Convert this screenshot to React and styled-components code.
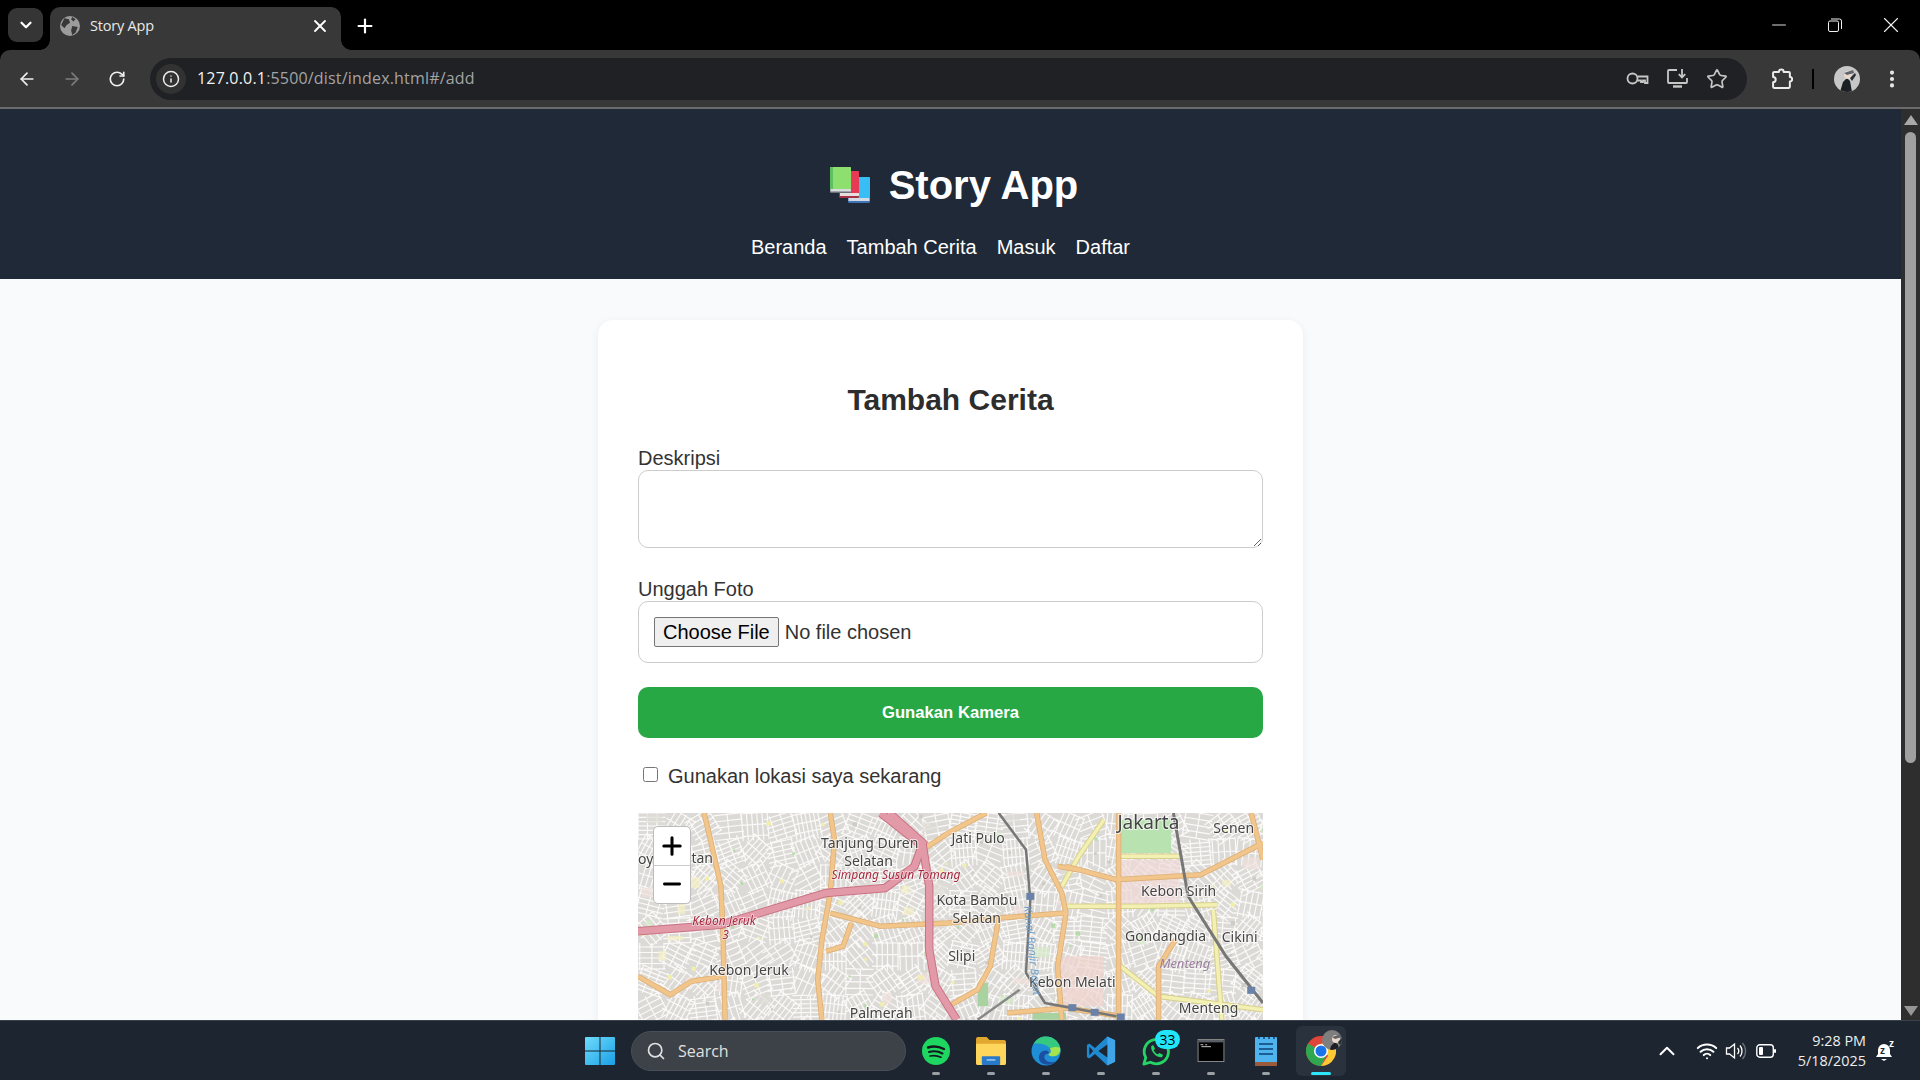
import React from "react";
import styled, { createGlobalStyle } from "styled-components";
import { Star, EllipsisVertical, ArrowLeft, ArrowRight, RotateCw, Info, ChevronDown, ChevronUp, Plus, X, Minus, Search, Wifi } from "lucide-react";

const Global = createGlobalStyle`
  html, body { margin: 0; padding: 0; height: 100%; overflow: hidden; }
  #root { height: 100%; }
  * { box-sizing: border-box; }
`;

const Screen = styled.div`
  width: 1920px; height: 1080px; display: flex; flex-direction: column;
  font-family: "Liberation Sans", Arial, sans-serif; overflow: hidden; background: #000;
`;
const TabStrip = styled.div`
  height: 50px; background: #000; display: flex; align-items: flex-end; padding-left: 8px; flex: none; color: #fff;
`;
const TabMenu = styled.div`
  width: 35px; height: 34px; margin-bottom: 8px; border-radius: 9px; background: #353535; display: flex; align-items: center; justify-content: center;
`;
const Tab = styled.div`
  width: 291px; height: 43px; margin-left: 7px; background: #383838; border-radius: 10px 10px 0 0; display: flex; align-items: center; padding: 0 11px 6px 10px; gap: 10px; position: relative;
  &::before, &::after { content: ""; position: absolute; bottom: 0; width: 10px; height: 10px; }
  &::before { left: -10px; background: radial-gradient(circle at 0 0, #000 9.500px, #383838 10px); }
  &::after { right: -10px; background: radial-gradient(circle at 100% 0, #000 9.500px, #383838 10px); }
`;
const TabTitle = styled.span`
  font-family: "Open Sans", "Noto Sans", sans-serif; font-size: 14.500px; color: #e8e8e8; flex: 1; letter-spacing: -0.2px;
`;
const NewTab = styled.div`
  width: 28px; height: 43px; margin-left: 10px; padding-bottom: 6px; display: flex; align-items: center; justify-content: center;
`;
const WindowButtons = styled.div`
  margin-left: auto; height: 50px; display: flex; align-items: center; padding-right: 1px;
`;
const WindowButton = styled.div`
  width: 56px; height: 50px; display: flex; align-items: center; justify-content: center; color: #f2f2f2;
`;
const Toolbar = styled.div`
  height: 59px; flex: none; background: #383838; border-bottom: 2px solid #6b6b6b; border-radius: 10px 10px 0 0; display: flex; align-items: center; padding: 0 0 0 8px; color: #e8e8e8;
`;
const NavIcon = styled.div`
  width: 38px; height: 38px; margin-right: ${p => p.$mr || 7}px; display: flex; align-items: center; justify-content: center; color: ${p => p.$dim ? "#7d7d7d" : "#f0f0f0"};
`;
const Omnibox = styled.div`
  margin-left: 13px; width: 1597px; height: 42px; background: #202124; border-radius: 21px; display: flex; align-items: center; padding: 0 10px 0 6px;
`;
const SiteInfo = styled.div`
  width: 30px; height: 30px; border-radius: 50%; background: #323232; display: flex; align-items: center; justify-content: center; color: #ececec; margin-right: 11px;
`;
const Url = styled.div`
  font-family: "Open Sans", "Noto Sans", sans-serif; font-size: 16px; letter-spacing: 0.18px; color: #a4a4a4; flex: 1; padding-bottom: 1px;
  b { font-weight: 400; color: #f2f2f2; }
`;
const OmniIcon = styled.div`
  width: 40px; display: flex; justify-content: center; color: #c7c7c7;
`;
const ToolIcon = styled.div`
  display: flex; align-items: center; justify-content: center; color: #ececec; width: 40px; margin-left: ${p => p.$ml || 0}px;
`;
const ToolSep = styled.div`
  width: 2px; height: 20px; background: #000; margin: 0 20px 0 10px;
`;
const Avatar = styled.div`
  width: 26px; height: 26px; border-radius: 50%; background: #c7c7c7; overflow: hidden; margin: 0 12px 0 0;
`;
const Viewport = styled.div`
  flex: 1; min-height: 0; display: flex; overflow: hidden; background: #f9fafb;
`;
const Page = styled.div`
  flex: 1; min-width: 0;
`;
const Header = styled.header`
  height: 170px; background: #1f2937; display: flex; flex-direction: column; align-items: center; color: #fff; padding-top: 50px;
`;
const Brand = styled.h1`
  margin: 0; padding-left: 7px; font-size: 40px; line-height: 52px; font-weight: 700; display: flex; align-items: center; gap: 19px; color: #fff;
`;
const Nav = styled.nav`
  display: flex; gap: 20px; margin-top: 24px; padding-right: 20px; font-size: 20px; line-height: 24px; color: #fff;
`;
const Main = styled.main`
  display: flex; justify-content: center; padding-top: 41px;
`;
const Card = styled.section`
  width: 705px; background: #fff; border-radius: 15px; box-shadow: 0 2px 10px rgba(0,0,0,0.06); padding: 63px 40px 40px;
`;
const Title = styled.h2`
  margin: 0 0 29px; font-size: 30px; line-height: 34px; font-weight: 700; color: #2d2d2d; text-align: center;
`;
const Field = styled.div`
  margin-bottom: ${p => p.$mb}px;
`;
const Label = styled.label`
  display: block; font-size: 20px; line-height: 24px; color: #333;
`;
const TextArea = styled.textarea`
  display: block; width: 100%; height: 78px; border: 1px solid #ccc; border-radius: 10px; background: #fff; padding: 12px; font: inherit; resize: vertical; outline: none;
`;
const FileInput = styled.input`
  display: block; width: 100%; height: 62px; border: 1px solid #ccc; border-radius: 10px; background: #fff; padding: 15px 15px; font-family: "Liberation Sans", Arial, sans-serif; font-size: 20px; color: #333;
  &::file-selector-button { font-family: inherit; font-size: 20px; height: 30px; padding: 1px 8px; margin-right: 6px; border: 1px solid #767676; border-radius: 2px; background: #efefef; color: #000; }
`;
const CameraButton = styled.button`
  display: block; width: 100%; height: 51px; border: 0; border-radius: 10px; background: #28a745; color: #fff; font-family: "Liberation Sans", Arial, sans-serif; font-size: 16.670px; font-weight: 700; margin-bottom: 26px;
`;
const CheckRow = styled.label`
  display: flex; align-items: center; font-size: 20px; line-height: 24px; color: #333; margin-bottom: 25px;
`;
const Check = styled.input`
  width: 15px; height: 15px; margin: 0 10px 3px 5px;
`;
const MapBox = styled.div`
  position: relative; height: 450px; overflow: hidden; background: #e4e0da;
`;
const ZoomControl = styled.div`
  position: absolute; left: 15px; top: 13px; width: 38px; height: 78px; background: #fff; border-radius: 5px; border: 1px solid #bdbdbd; display: flex; flex-direction: column;
`;
const ZoomButton = styled.div`
  flex: 1; display: flex; align-items: center; justify-content: center; color: #000;
  & + & { border-top: 1px solid #ccc; }
`;
const Scrollbar = styled.div`
  width: 19px; flex: none; background: #2e2e2e; display: flex; flex-direction: column; align-items: center; padding: 6px 0 4px;
`;
const ScrollThumb = styled.div`
  width: 11px; height: 631px; background: #a0a0a0; border-radius: 6px; margin: 7px 0 auto;
`;
const Taskbar = styled.footer`
  height: 60px; flex: none; background: #1c2530; border-top: 1px solid #3a424c; display: flex; align-items: center; position: relative; color: #fff;
`;
const TaskCenter = styled.div`
  display: flex; align-items: center; margin-left: 575px; height: 100%;
`;
const SearchBox = styled.div`
  width: 275px; height: 40px; border-radius: 20px; background: #3d4148; border: 1px solid #4a4f57; margin: 0 2px 0 6px; display: flex; align-items: center; padding-left: 14px; gap: 12px; color: #e0e0e0; font-family: "Open Sans", "Noto Sans", sans-serif; font-size: 16px;
`;
const TaskApp = styled.div`
  width: 55px; height: 50px; position: relative; display: flex; align-items: center; justify-content: center; border-radius: 6px;
  background: ${p => p.$active ? "#2a323d" : "transparent"}; ${p => p.$active ? "width: 50px; margin: 0 2.500px;" : ""}
  &::after { content: ""; position: absolute; bottom: 1px; left: 50%; transform: translateX(-50%); height: 3px; border-radius: 2px; width: ${p => p.$active ? 20 : 8}px; background: ${p => p.$active ? "#2ee6fb" : "#9ba0a6"}; }
`;
const WinButton = styled.div`
  width: 50px; height: 50px; display: flex; align-items: center; justify-content: center;
`;
const Badge = styled.span`
  position: absolute; top: 4px; right: 3px; min-width: 25px; height: 19px; border-radius: 10px; background: #21e5fb; color: #000; font-family: "Open Sans", sans-serif; font-size: 14px; line-height: 19px; text-align: center;
`;
const Tray = styled.div`
  margin-left: auto; display: flex; align-items: center; padding-right: 24px; height: 100%; color: #fff;
`;
const TrayIcon = styled.div`
  display: flex; align-items: center; justify-content: center; width: ${p => p.$w || 29}px; margin-right: ${p => p.$mr || 0}px;
`;
const Clock = styled.div`
  width: 80px; text-align: right; font-family: "Open Sans", "Noto Sans", sans-serif; font-size: 14.400px; line-height: 20px; color: #eee; margin: 0 10px 0 4px; white-space: nowrap;
`;
const ChromeProfile = styled.span`
  position: absolute; top: 4px; right: 4px; width: 20px; height: 20px; border-radius: 50%; background: #7e7e7e; overflow: hidden;
`;
const MapSvg = styled.svg`
  display: block; width: 625px; height: 450px;
`;
const MapLabel = styled.text`
  font-family: "Noto Sans", "DejaVu Sans", sans-serif; font-size: ${p => p.$size}px; fill: #444; stroke: #fff; stroke-width: 2px; paint-order: stroke; stroke-opacity: 0.7;
`;
const MapRoadLabel = styled.text`
  font-family: "Noto Sans", "DejaVu Sans", sans-serif; font-style: italic; font-size: 12px; fill: #a5283e; stroke: #fff; stroke-width: 1.500px; paint-order: stroke; stroke-opacity: 0.6;
`;
const MapDistrict = styled.text`
  font-family: "Noto Sans", sans-serif; font-style: italic; font-size: 13px; fill: #9a7f9e;
`;
const MapWater = styled.text`
  font-family: "Noto Sans", sans-serif; font-style: italic; font-size: 11px; fill: #6e9ec8;
`;

const sx = x => (x - 43) / 2.376;
const sy = y => (y - 40) / 3;
const line = s => s.trim().split(/\s+/).map(p => { const [a, b] = p.split(","); return `${sx(+a).toFixed(1)},${sy(+b).toFixed(1)}`; }).join(" ");

const neighbourhoods = (() => {
  let seed = 77; const r = () => (seed = (seed * 16807) % 2147483647) / 2147483647;
  let white = "", blocks = [], patches = [];
  const size = 26;
  for (let cx = 0; cx < 625; cx += size) for (let cy = 0; cy < 215; cy += size) {
    const a = r() * Math.PI, dx = Math.cos(a), dy = Math.sin(a);
    const gap = 4 + r() * 2.500;
    for (let k = -size / 2; k < size / 2; k += gap) {
      const mx = cx + size / 2 - dy * k, my = cy + size / 2 + dx * k, l = size * 0.55;
      white += `M${(mx - dx * l).toFixed(1)} ${(my - dy * l).toFixed(1)}L${(mx + dx * l).toFixed(1)} ${(my + dy * l).toFixed(1)}`;
    }
    for (let k = -size / 2; k < size / 2; k += gap * 2.200) {
      const mx = cx + size / 2 + dx * k, my = cy + size / 2 + dy * k, l = size * 0.5;
      white += `M${(mx + dy * l).toFixed(1)} ${(my - dx * l).toFixed(1)}L${(mx - dy * l).toFixed(1)} ${(my + dx * l).toFixed(1)}`;
    }
    if (r() < 0.25) blocks.push([cx + r() * size, cy + r() * size, 6 + r() * 12, 4 + r() * 8, ["#efdfdc", "#dedbd6", "#d5ebcb", "#f3efc4"][Math.floor(r() * 4)]]);
    if (r() < 0.4) patches.push([cx + r() * size, cy + r() * size, 2 + r() * 2.500, ["#f2eeac", "#b5dca8", "#cfccc6"][Math.floor(r() * 3)]]);
  }
  return { white, blocks, patches };
})();

const ORANGE = [
  "200,40 215,120 240,260 245,400 250,660",
  "500,40 510,120 500,280 480,420 470,540 480,660",
  "870,40 780,100 720,150",
  "43,530 120,585 170,545 245,530",
  "500,340 620,380 780,370 900,355 1060,340",
  "550,370 530,440 490,455",
  "1060,340 1050,280 1010,180 990,40",
  "1060,340 1040,500 1050,660",
  "900,355 880,500 850,570 780,620",
  "1185,40 1185,660",
  "1060,200 1180,240 1380,225 1528,130",
  "1040,200 1090,210",
  "1320,420 1280,500 1280,660",
  "920,640 1060,625 1190,650",
  "1500,40 1528,180",
];
const YELLOW = [
  "1060,320 1240,320 1420,315",
  "1150,60 1090,170 1050,260",
  "1185,170 1330,170",
  "1410,330 1430,660",
  "1190,500 1280,590 1528,630",
];
const LABELS = [
  ["Tanjung Duren", 478, 145], ["Selatan", 533, 198], ["Jati Pulo", 788, 130], ["Senen", 1410, 100], ["Kebon Sirih", 1238, 290],
  ["Kota Bambu", 752, 316], ["Selatan", 790, 370], ["Gondangdia", 1200, 424], ["Cikini", 1430, 426], ["Slipi", 780, 484],
  ["Kebon Jeruk", 212, 526], ["Kebon Melati", 972, 562], ["Palmerah", 546, 654], ["Menteng", 1328, 640], ["oy", 43, 193], ["tan", 170, 190],
];

const StreetMap = () => (
  <MapSvg viewBox="0 0 625 450">
    <defs><filter id="soft"><feGaussianBlur stdDeviation="0.550" /></filter></defs>
    <g filter="url(#soft)">
      <rect width="625" height="450" fill="#dcdad6" />
      <path d={neighbourhoods.white} stroke="#fbfaf9" strokeWidth="1.200" fill="none" />
      {neighbourhoods.blocks.map(([x, y, w, h, c]) => <rect key={`${x}-${y}`} x={x} y={y} width={w} height={h} fill={c} opacity="0.7" />)}
      {neighbourhoods.patches.map(([x, y, s, c]) => <rect key={`${x}:${y}`} x={x} y={y} width={s} height={s} fill={c} />)}
      <polygon points={line("1190,60 1310,60 1310,160 1190,160")} fill="#b8e3b0" />
      <polygon points={line("1190,180 1330,180 1330,320 1190,320")} fill="#efd9d6" opacity="0.7" />
      <polygon points={line("1040,470 1150,470 1150,620 1040,620")} fill="#efd3cd" opacity="0.7" />
      <polygon points={line("850,550 875,550 875,620 850,620")} fill="#a8d3a0" />
      <polygon points={line("980,640 1060,640 1060,660 980,660")} fill="#a8d3a0" />
      {YELLOW.map(p => <polyline key={p} points={line(p)} fill="none" stroke="#d8cf8c" strokeWidth="5.500" />)}
      {YELLOW.map(p => <polyline key={p} points={line(p)} fill="none" stroke="#f3f0b4" strokeWidth="3.500" />)}
      {ORANGE.map(p => <polyline key={p} points={line(p)} fill="none" stroke="#ddb07a" strokeWidth="5.500" />)}
      {ORANGE.map(p => <polyline key={p} points={line(p)} fill="none" stroke="#f2c68b" strokeWidth="3.800" />)}
      <polyline points={line("43,395 240,375 490,280 630,265 700,200 720,130 640,40")} fill="none" stroke="#c97384" strokeWidth="8.500" />
      <polyline points={line("620,40 720,140 735,260 735,450 750,560 800,660")} fill="none" stroke="#c97384" strokeWidth="8.500" />
      <polyline points={line("43,395 240,375 490,280 630,265 700,200 720,130 640,40")} fill="none" stroke="#e39aa8" strokeWidth="6.500" />
      <polyline points={line("620,40 720,140 735,260 735,450 750,560 800,660")} fill="none" stroke="#e39aa8" strokeWidth="6.500" />
      <polyline points={line("900,40 965,150 975,300 965,520 1010,610 1180,650")} fill="none" stroke="#777" strokeWidth="2.500" />
      <polyline points={line("1315,40 1350,290 1440,470 1528,610")} fill="none" stroke="#777" strokeWidth="3" />
      <polyline points={line("850,660 950,570")} fill="none" stroke="#888" strokeWidth="2.500" />
      {[[975, 290], [1075, 624], [1128, 638], [1190, 652], [1500, 572]].map(([x, y]) => <rect key={x} x={sx(x) - 4} y={sy(y) - 3.500} width="8" height="7" fill="#6b82a8" />)}
      {LABELS.map(([t, x, y]) => <MapLabel key={t + x} x={sx(x)} y={sy(y)} $size={14}>{t}</MapLabel>)}
      <MapLabel x={sx(1182)} y={sy(88)} $size={19}>Jakarta</MapLabel>
      <MapRoadLabel x={sx(503)} y={sy(237)}>Simpang Susun Tomang</MapRoadLabel>
      <MapRoadLabel x={sx(172)} y={sy(375)}>Kebon Jeruk</MapRoadLabel>
      <MapRoadLabel x={sx(243)} y={sy(418)}>3</MapRoadLabel>
      <MapDistrict x={sx(1282)} y={sy(505)}>Menteng</MapDistrict>
      <MapWater transform={`translate(${sx(960)} ${sy(320)}) rotate(84)`}>Kanal Banjir Barat</MapWater>
    </g>
  </MapSvg>
);

const Globe = () => (
  <svg width="20" height="20" viewBox="0 0 18 18"><circle cx="9" cy="9" r="9" fill="#9c9c9c" /><path d="M4 2l4 1 1 3-3 2-2 3-3-3zM11 9l5 1-2 5-3 2-1-4zM11 1l3 2-2 2-2-2z" fill="#383838" /></svg>
);
const Restore = () => (
  <svg width="14" height="14" viewBox="0 0 14 14" fill="none" stroke="currentColor"><rect x="0.500" y="3" width="10" height="10.500" rx="1.500" /><path d="M3 1h8.500a2 2 0 0 1 2 2v8" /></svg>
);
const KeyIcon = () => (
  <svg width="23" height="13" viewBox="0 0 23 13" fill="none" stroke="currentColor" strokeWidth="1.800"><circle cx="6.500" cy="6.500" r="5" /><path d="M11.500 4.500h10v6.500h-2.500V8.500h-2V10h-2V8.500h-3.500" /></svg>
);
const MonitorDownload = () => (
  <svg width="21" height="19" viewBox="0 0 21 19" fill="none" stroke="currentColor" strokeWidth="1.800"><path d="M10 1H2a1 1 0 0 0-1 1v11a1 1 0 0 0 1 1h17a1 1 0 0 0 1-1V9" /><path d="M6 17.500h9" strokeWidth="2.400" /><path d="M15 0v8M11.800 5.200L15 8.400l3.200-3.200" /></svg>
);
const PuzzleIcon = () => (
  <svg width="22" height="22" viewBox="0 0 21 21" fill="none" stroke="currentColor" strokeWidth="1.900" strokeLinejoin="round"><path d="M7.500 3.800a2.300 2.300 0 0 1 4.600 0H17a1 1 0 0 1 1 1v3.800a2.200 2.200 0 0 1 0 4.400V18a1 1 0 0 1-1 1H3a1 1 0 0 1-1-1v-4.500a2.500 2.500 0 0 0 0-5V4.800a1 1 0 0 1 1-1z" /></svg>
);
const Books = () => (
  <svg width="40" height="36" viewBox="0 0 40 36">
    <rect x="18" y="10" width="22" height="26" rx="1.500" fill="#3f73b5" />
    <rect x="18.500" y="31" width="21" height="3" fill="#d5dbe4" />
    <rect x="18" y="10" width="22" height="21" rx="1" fill="#38bdf5" />
    <rect x="9" y="4" width="20" height="27" rx="1.500" fill="#a83044" />
    <rect x="10" y="26" width="19" height="3" fill="#e6dde0" />
    <rect x="9" y="4" width="20" height="22" rx="1" fill="#e63a55" />
    <rect x="0" y="0" width="21" height="26" rx="1" fill="#6c7077" />
    <rect x="0.500" y="22" width="20.500" height="2.500" fill="#d9dcdf" />
    <rect x="0" y="0" width="21" height="22" rx="1" fill="#8ee06e" />
    <rect x="0" y="0" width="3" height="22" fill="#5fbe5f" />
  </svg>
);
const AvatarArt = () => (
  <svg width="26" height="26" viewBox="0 0 26 26"><path d="M6 26l3-10 4-4 3 3 2 11z" fill="#1c1f24" /><circle cx="14" cy="9" r="4" fill="#e8d9cf" /><path d="M10 7l9-3 1 3-7 2z" fill="#60646a" /><path d="M16 12l5-5 1 2-4 6z" fill="#2a2d33" /></svg>
);
const WindowsLogo = () => (
  <svg width="30" height="30" viewBox="0 0 30 30"><defs><linearGradient id="wl" x1="0" y1="0" x2="1" y2="1"><stop offset="0" stopColor="#6fdcfb" /><stop offset="1" stopColor="#1a9fe6" /></linearGradient></defs><path d="M1 1h13.500v13.500H0V2a1 1 0 0 1 1-1zM15.500 1H29a1 1 0 0 1 1 1v12.500H15.500zM0 15.500h14.500V29H1a1 1 0 0 1-1-1zM15.500 15.500H30V28a1 1 0 0 1-1 1H15.500z" fill="url(#wl)" /></svg>
);
const Spotify = () => (
  <svg width="28" height="28" viewBox="0 0 28 28"><circle cx="14" cy="14" r="14" fill="#1ed760" /><g fill="none" stroke="#15181c" strokeLinecap="round"><path d="M6 10.500c5-1.500 11-1 16 1.500" strokeWidth="2.400" /><path d="M7 15c4.500-1.200 9.500-.7 13.500 1.500" strokeWidth="2" /><path d="M8 19c3.800-.9 7.500-.5 11 1.200" strokeWidth="1.700" /></g></svg>
);
const Folder = () => (
  <svg width="30" height="28" viewBox="0 0 31 29"><path d="M0 2a2 2 0 0 1 2-2h9l3 3h15a2 2 0 0 1 2 2v22a2 2 0 0 1-2 2H2a2 2 0 0 1-2-2z" fill="#e2a72e" /><path d="M0 7h31v20a2 2 0 0 1-2 2H2a2 2 0 0 1-2-2z" fill="#ffd65c" /><rect x="6" y="20" width="19" height="9" rx="1" fill="#2a78c8" /><rect x="11" y="23" width="9" height="1.500" fill="#9fd0f5" /></svg>
);
const Edge = () => (
  <svg width="30" height="30" viewBox="0 0 31 31"><circle cx="15.500" cy="15.500" r="15" fill="#1e8fd6" /><path d="M3 8C6 2 11 .5 15.500 .5 24 .5 30.500 7 30.500 15c0 4-3 6-7 6-3 0-5-1-5-2.500 3-.5 3-3 1.500-5.500C17 9 9 7 3 8z" fill="#35c87f" /><path d="M30 12c1 6-3 9-7 9-3 0-5-1-5-2.500 3-.5 3-3 1.500-5.500 3-2 7-2 10.500-1z" fill="#a5e34f" /><path d="M11 28c-5-4-3-13 4-13 3 0 4 2 3 3.500-4-1-6 4-2 7 3 2 7 2 10 0-4 5-10 5-15 2.500z" fill="#1d4fa0" /></svg>
);
const VSCode = () => (
  <svg width="30" height="30" viewBox="0 0 100 100"><path d="M71 2l26 12v72L71 98 30 60 11 75 3 70V30l8-5 19 15z" fill="#1f8ad2" /><path d="M71 2l26 12v72L71 98z" fill="#3ea6e8" /><path d="M71 28L41 50l30 22z" fill="#1c2530" /><path d="M11 36v28l13-14z" fill="#1c2530" /></svg>
);
const WhatsApp = () => (
  <svg width="28" height="28" viewBox="0 0 30 30" style={{ marginTop: 2 }}><path d="M2 28l2-7A13 13 0 1 1 9 26z" fill="none" stroke="#25d366" strokeWidth="3" strokeLinejoin="round" /><path d="M10 8.500l2-1 2 4-1.500 1.500c1 2 2.500 3.500 4.500 4.500l1.500-1.500 4 2-1 2.500c-5 1.500-13-6-11.500-12z" fill="#25d366" /></svg>
);
const Terminal = () => (
  <svg width="28" height="23" viewBox="0 0 28 24"><rect x="0.500" y="0.500" width="27" height="23" fill="#000" stroke="#8c8c8c" /><rect x="1" y="1" width="26" height="2.500" fill="#5a5f66" /><path d="M3 6h3M8 6h2M4 8h10" stroke="#ccc" strokeWidth="1" /></svg>
);
const Notepad = () => (
  <svg width="22" height="30" viewBox="0 0 22 30"><rect y="1" width="22" height="28" rx="1" fill="#4fb4ee" /><rect y="26" width="22" height="4" fill="#9a5a3c" /><path d="M4 8h14M4 13h14M4 18h14" stroke="#1c5d94" strokeWidth="2" /><path d="M4 1v2M9 1v2M14 1v2M19 1v2" stroke="#1c5d94" strokeWidth="2" /></svg>
);
const Chrome = () => (
  <svg width="30" height="30" viewBox="0 0 30 30"><circle cx="15" cy="15" r="15" fill="#e0453a" /><path d="M15 15L2 7.500A15 15 0 0 0 15 30l7.500-15z" fill="#2fa650" /><path d="M15 30A15 15 0 0 0 28 7.500H15L22 20z" fill="#fcc934" /><circle cx="15" cy="15" r="7" fill="#fff" /><circle cx="15" cy="15" r="5.500" fill="#1a73e8" /></svg>
);
const Speaker = () => (
  <svg width="22" height="20" viewBox="0 0 22 20" fill="none" stroke="#fff" strokeWidth="1.300"><path d="M1.500 7h3l5-4v14l-5-4h-3z" /><path d="M12.500 7a4.500 4.500 0 0 1 0 6" /><path d="M15 4.500a8.500 8.500 0 0 1 0 11" /><path d="M17.500 2a12 12 0 0 1 0 16" opacity="0.35" /></svg>
);
const Battery = () => (
  <svg width="20" height="14" viewBox="0 0 20 14" fill="none"><rect x="0.800" y="0.800" width="16.500" height="12.400" rx="3" stroke="#fff" strokeWidth="1.400" /><rect x="3" y="3" width="4" height="8" rx="1" fill="#fff" /><rect x="18" y="5" width="2" height="4" rx="1" fill="#fff" /></svg>
);
const Bell = () => (
  <svg width="20" height="22" viewBox="0 0 20 22"><path d="M8 4a6 6 0 0 0-6 6v4l-2 3h16l-2-3v-4a6 6 0 0 0-6-6z" fill="#fff" /><path d="M5 19h6l-3 2z" fill="#fff" /><text x="4" y="14" fontFamily="Liberation Sans" fontWeight="700" fontSize="10" fill="#1c2530">z</text><text x="13" y="7" fontFamily="Liberation Sans" fontWeight="700" fontSize="10" fill="#fff">z</text></svg>
);

export default function App() {
  return (
    <>
      <Global />
      <Screen>
        <TabStrip>
          <TabMenu><ChevronDown size={18} strokeWidth={3} /></TabMenu>
          <Tab>
            <Globe />
            <TabTitle>Story App</TabTitle>
            <X size={20} strokeWidth={2.200} />
          </Tab>
          <NewTab><Plus size={22} strokeWidth={2.400} /></NewTab>
          <WindowButtons>
            <WindowButton><Minus size={22} strokeWidth={1} /></WindowButton>
            <WindowButton><Restore /></WindowButton>
            <WindowButton><X size={26} strokeWidth={1} /></WindowButton>
          </WindowButtons>
        </TabStrip>
        <Toolbar>
          <NavIcon><ArrowLeft size={20} strokeWidth={2} /></NavIcon>
          <NavIcon $dim><ArrowRight size={20} strokeWidth={2} /></NavIcon>
          <NavIcon $mr={1}><RotateCw size={18} strokeWidth={2.200} /></NavIcon>
          <Omnibox>
            <SiteInfo><Info size={18} strokeWidth={2} /></SiteInfo>
            <Url><b>127.0.0.1</b>:5500/dist/index.html#/add</Url>
            <OmniIcon><KeyIcon /></OmniIcon>
            <OmniIcon><MonitorDownload /></OmniIcon>
            <OmniIcon><Star size={22} strokeWidth={1.800} /></OmniIcon>
          </Omnibox>
          <ToolIcon $ml={15}><PuzzleIcon /></ToolIcon>
          <ToolSep />
          <Avatar><AvatarArt /></Avatar>
          <ToolIcon><EllipsisVertical size={22} strokeWidth={2.500} /></ToolIcon>
        </Toolbar>
        <Viewport>
          <Page>
            <Header>
              <Brand><Books />Story App</Brand>
              <Nav><span>Beranda</span><span>Tambah Cerita</span><span>Masuk</span><span>Daftar</span></Nav>
            </Header>
            <Main>
              <Card>
                <Title>Tambah Cerita</Title>
                <Field $mb={29}>
                  <Label>Deskripsi</Label>
                  <TextArea />
                </Field>
                <Field $mb={24}>
                  <Label>Unggah Foto</Label>
                  <FileInput type="file" />
                </Field>
                <CameraButton>Gunakan Kamera</CameraButton>
                <CheckRow><Check type="checkbox" />Gunakan lokasi saya sekarang</CheckRow>
                <MapBox>
                  <StreetMap />
                  <ZoomControl>
                    <ZoomButton><Plus size={28} strokeWidth={2.600} /></ZoomButton>
                    <ZoomButton><Minus size={26} strokeWidth={2.600} /></ZoomButton>
                  </ZoomControl>
                </MapBox>
              </Card>
            </Main>
          </Page>
          <Scrollbar>
            <svg width="14" height="10" viewBox="0 0 14 10"><path d="M7 0l7 10H0z" fill="#a8a8a8" /></svg>
            <ScrollThumb />
            <svg width="14" height="10" viewBox="0 0 14 10"><path d="M7 10l7-10H0z" fill="#969696" /></svg>
          </Scrollbar>
        </Viewport>
        <Taskbar>
          <TaskCenter>
            <WinButton><WindowsLogo /></WinButton>
            <SearchBox><Search size={20} strokeWidth={2} />Search</SearchBox>
            <TaskApp><Spotify /></TaskApp>
            <TaskApp><Folder /></TaskApp>
            <TaskApp><Edge /></TaskApp>
            <TaskApp><VSCode /></TaskApp>
            <TaskApp><WhatsApp /><Badge>33</Badge></TaskApp>
            <TaskApp><Terminal /></TaskApp>
            <TaskApp><Notepad /></TaskApp>
            <TaskApp $active><Chrome /><ChromeProfile><AvatarArt /></ChromeProfile></TaskApp>
          </TaskCenter>
          <Tray>
            <TrayIcon $w={40} $mr={5}><ChevronUp size={26} strokeWidth={1.800} /></TrayIcon>
            <TrayIcon><Wifi size={22} strokeWidth={2.200} /></TrayIcon>
            <TrayIcon><Speaker /></TrayIcon>
            <TrayIcon $w={32}><Battery /></TrayIcon>
            <Clock><div>9:28 PM</div><div>5/18/2025</div></Clock>
            <Bell />
          </Tray>
        </Taskbar>
      </Screen>
    </>
  );
}
